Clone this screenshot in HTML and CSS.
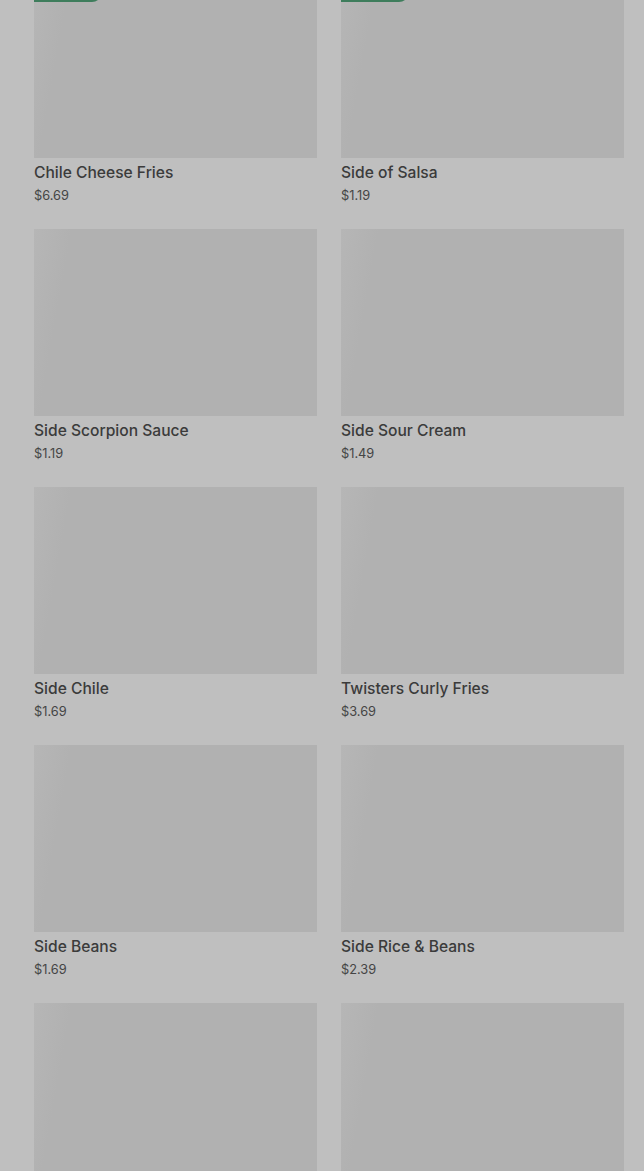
FILE: index.html
```html
<!DOCTYPE html>
<html lang="en">
<head>
<meta charset="UTF-8">
<title>Sides</title>
<link rel="stylesheet" href="styles.css">
</head>
<body>

<div class="menu">
    <div class="item">
        <div class="photo"><span class="badge"></span></div>
        <div class="name">Chile Cheese Fries</div>
        <div class="price">$6.69</div>
    </div>
    <div class="item">
        <div class="photo"><span class="badge"></span></div>
        <div class="name">Side of Salsa</div>
        <div class="price">$1.19</div>
    </div>
    <div class="item">
        <div class="photo"></div>
        <div class="name">Side Scorpion Sauce</div>
        <div class="price">$1.19</div>
    </div>
    <div class="item">
        <div class="photo"></div>
        <div class="name">Side Sour Cream</div>
        <div class="price">$1.49</div>
    </div>
    <div class="item">
        <div class="photo"></div>
        <div class="name">Side Chile</div>
        <div class="price">$1.69</div>
    </div>
    <div class="item">
        <div class="photo"></div>
        <div class="name">Twisters Curly Fries</div>
        <div class="price">$3.69</div>
    </div>
    <div class="item">
        <div class="photo"></div>
        <div class="name">Side Beans</div>
        <div class="price">$1.69</div>
    </div>
    <div class="item">
        <div class="photo"></div>
        <div class="name">Side Rice &amp; Beans</div>
        <div class="price">$2.39</div>
    </div>
    <div class="item">
        <div class="photo"></div>
        <div class="name"></div>
        <div class="price"></div>
    </div>
    <div class="item">
        <div class="photo"></div>
        <div class="name"></div>
        <div class="price"></div>
    </div>
</div>

</body>
</html>
```

FILE: styles.css
```css
html, body {
    height: 100%;
}

body {
    margin: 0;
    background: #bfbfbf;
    font-family: Inter, Roboto, "Liberation Sans", sans-serif;
    color: #3a3a3a;
    overflow: hidden;
}

.menu {
    display: grid;
    grid-template-columns: 283px 283px;
    column-gap: 24px;
    row-gap: 24px;
    padding: 0 20px 0 34px;
    margin-top: -29px;
}

.photo {
    position: relative;
    height: 187px;
    background: #b1b1b1;
    background-image: linear-gradient(100deg, #b6b6b6 0%, #b1b1b1 12%, #b1b1b1 100%);
}

.badge {
    position: absolute;
    top: 0;
    left: 0;
    width: 68px;
    height: 31px;
    background: #3e7d5c;
    border-bottom-right-radius: 10px;
}

.name {
    margin-top: 5px;
    font-size: 15.6px;
    font-weight: 500;
    line-height: 20px;
    height: 20px;
    color: #3b3b3b;
}

.price {
    margin-top: 4px;
    font-size: 12.8px;
    line-height: 18px;
    height: 18px;
    color: #454545;
}
```
